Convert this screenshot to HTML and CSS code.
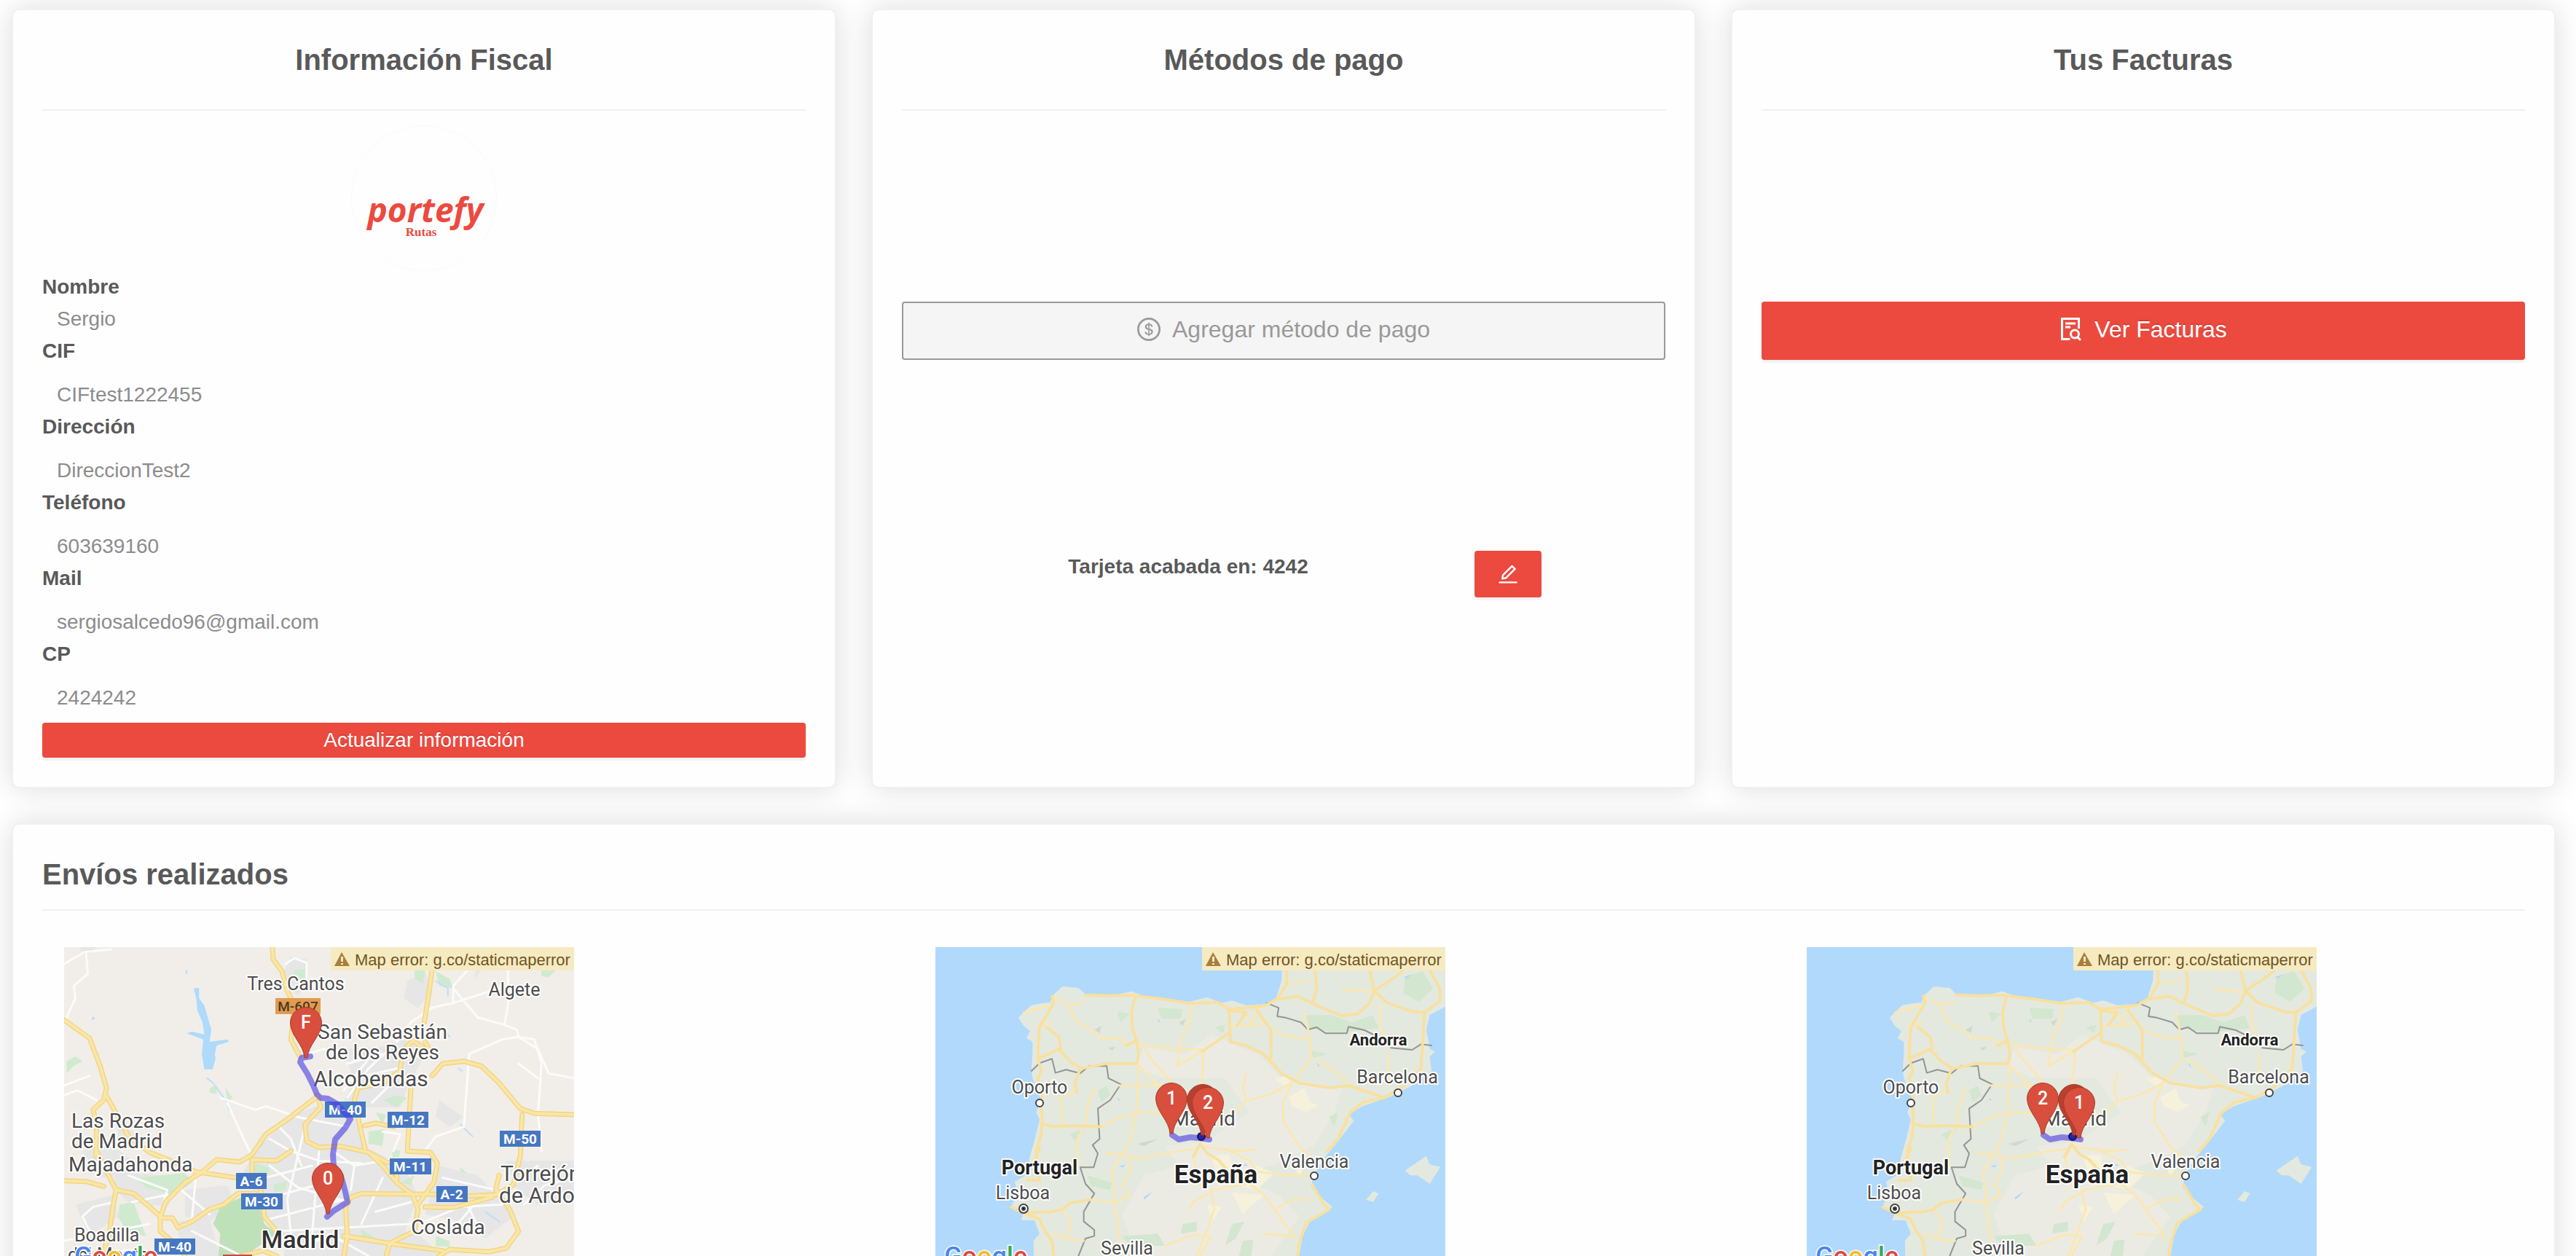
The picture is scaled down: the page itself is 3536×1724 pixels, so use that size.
FILE: index.html
```html
<!DOCTYPE html>
<html lang="es">
<head>
<meta charset="utf-8">
<meta name="viewport" content="width=device-width, initial-scale=1">
<title>Portefy Rutas</title>
<link rel="stylesheet" href="styles.css">
</head>
<body>
<svg class="sprite" aria-hidden="true">
  <defs>
    <path id="pin" d="M-2 0C-3-18-21-30-21.500-48A21.500 21.500 0 0 1 21.500-48C21-30 3-18 2 0Z"/>
    <g id="spain-roads" class="geo">
      <path d="M380 262L385 290L365 340L345 390L342 450L340 520L350 570L340 600L355 650L348 700L352 760L350 830L335 900L340 960L345 1020L310 1020M475 257L540 260L605 258L640 265L700 275L770 292L850 288L880 315L930 310L985 300L1015 275L1075 262L1130 300L1200 343L1245 335L1280 290L1292 240L1280 156M1292 240L1345 190L1375 156M1292 240L1330 290L1400 325L1435 330L1480 280L1478 230L1450 156M1045 156L1045 210L1020 270M1125 156L1130 230L1118 290M615 265L605 330L608 400L620 445L590 465M620 445L625 500L620 540L530 540L465 560L430 530L400 480L340 520M365 390L400 430L405 480M882 320L885 450L930 465L980 500L1030 580L1080 620L1170 640L1220 630L1280 660L1320 680M882 320L930 330L905 380M960 320L1000 400L1000 520M885 410L805 490M1435 330L1430 450L1425 560L1370 640L1320 680L1260 700L1225 740L1190 850L1160 900M350 785L380 798L450 795L520 800M460 560L445 620L450 660M345 890L330 940M1118 1040L1150 1120L1165 1140L1100 1195L1080 1280L1075 1332M265 1130L300 1155L380 1150L410 1140L430 1115L490 1100M300 1155L345 1180L360 1230L380 1270L385 1332M800 870L820 910L850 935L880 985M800 870L780 925"/>
    </g>
    <g id="spain-minor" class="geo">
      <path d="M385 265L430 300L440 340L450 370L490 400L520 435L570 435L600 465M340 380L380 375M300 330L370 300M430 300L470 285M775 295L770 360L745 440L735 550L810 485L805 600L800 640M630 450L660 520L715 610M625 540L620 740L600 860L550 985L560 1130L575 1300M645 465L740 480L805 480M620 540L690 640L715 620M570 630L690 630M520 800L560 770L620 740L700 745M930 580L920 640L930 690L900 740L850 760M930 695L1000 665L1060 620M1060 620L1035 700L1035 780L1080 880L1110 920M1000 400L1040 425L1110 440L1115 520L1085 570L1070 610M885 380L940 385L990 370M920 330L950 380M960 300L950 370M1130 525L1170 560L1210 610L1230 640M1330 500L1335 600M1310 290L1310 400L1330 430M450 650L405 680L410 790M500 640L480 720L475 800M470 800L450 860L455 970L420 980L340 960M530 905L580 915L630 930L720 905L790 890M600 930L600 990L580 1040L600 1085L560 1110L490 1100M800 880L900 900L955 895M870 890L940 940L960 985L1040 1000L1110 1000M880 985L930 1035L840 1060L780 1110L770 1140M830 1060L840 1140L820 1220L790 1332M940 1035L980 1080L1010 1140L1040 1200L1070 1260M1010 1140L1060 1100L1110 1100M980 1240L1060 1250M700 1290L780 1245L830 1250L800 1332M410 1140L435 1190L420 1260L385 1240M420 1260L470 1270M780 920L800 1040M1095 330L1110 430M1050 210L1110 195M1205 235L1290 245"/>
    </g>
    <g id="spain" class="geo">
      <path class="sea" d="M50 60H1494V1420H50Z"/>
      <path class="land" d="M330 1420L328 1270L345 1240L330 1185L292 1185L298 1160L265 1135L270 1110L285 1090L275 1025L305 1000L318 920L330 860L345 770L335 740L350 690L325 600L322 560L325 500L325 450L308 435L318 405L300 385L285 350L320 300L350 292L375 288L380 262L410 222L455 228L475 255L560 258L605 242L640 262L700 272L770 285L820 266L860 290L890 280L930 300L985 295L1015 270L1030 200L1035 60H1494V305L1450 340L1440 400L1450 480L1465 490L1450 510L1455 570L1400 630L1340 675L1260 715L1220 750L1235 775L1190 860L1150 930L1120 1000L1115 1050L1140 1090L1175 1130L1110 1190L1090 1250L1080 1332V1420Z"/>
      <path class="plain" d="M640 470L760 500L830 420L960 500L1030 600L1200 640L1180 740L1120 880L1000 960L900 1000L1020 1080L1080 1170L1000 1332H620L580 1160L640 1000L740 960L700 880L820 860L940 740L870 600L700 600L620 560Z"/>
      <path class="dry" d="M1050 680L1095 640L1110 700L1135 710L1100 740L1060 715ZM1010 600L1060 590L1045 640ZM830 920L880 915L890 960L930 990L960 960L1010 990L960 1060L900 1040L850 1000ZM890 1070L980 1080L920 1160ZM820 1120L860 1130L835 1190ZM1050 930L1110 940L1080 1000Z"/>
      <path class="wood" d="M680 310L750 315L745 355L690 355ZM565 325L600 335L575 370ZM1100 340L1170 340L1230 370L1290 340L1305 395L1240 405L1180 410L1130 400L1100 385ZM1380 180L1430 160L1460 230L1420 285L1375 250ZM430 830L475 805L450 865ZM480 1000L550 1030L545 1060L490 1045ZM890 1200L925 1190L900 1260L870 1290ZM750 1200L790 1190L790 1230L745 1240ZM1165 760L1190 740L1180 800ZM580 1250L680 1240L700 1290L600 1290ZM510 650L535 630L545 670L520 700ZM1110 485L1160 500L1120 515ZM840 390L870 380L865 415ZM920 1270L950 1265L945 1332H910Z"/>
      <path class="shade" d="M620 870L680 850L640 880ZM500 400L520 385L515 415ZM540 475L560 470L550 485ZM740 370L760 355L750 385Z"/>
      <path class="land" d="M1380 980L1440 920L1450 955L1480 965L1450 1035L1415 1000L1395 1000ZM1270 1100L1290 1065L1305 1075L1290 1110Z"/>
      <path class="lake" d="M565 680L575 690L568 692ZM640 1090L665 1065L650 1090L640 1100ZM1130 535L1140 555L1133 550ZM925 950L935 960L925 962ZM570 960L590 958L580 968ZM1375 185L1400 172L1385 188ZM680 355L688 365L682 368Z"/>
      <path class="frontier" d="M322 570L345 538L380 520L390 578L420 565L460 580L485 550L535 550L540 600L575 625L545 690L510 725L515 850L495 875L510 910L498 967L460 967L475 1035L500 1075L470 1150L470 1190L500 1225L500 1250L475 1260L455 1332M988 290L1022 310L1018 345L1040 350L1085 370L1105 400L1130 390L1155 415L1215 415L1220 388L1265 402L1290 420M1340 475L1400 483L1425 460L1455 465"/>
    </g>
    <g id="madrid-roads" class="geo">
      <path d="M648 60L650 110L675 160L690 240L710 300L705 380L700 440L725 510M1100 156L1090 260L1078 370M58 360L130 435L160 550L178 640L170 690L140 730L150 800L148 920M175 665L215 770L240 840L300 905L360 940L430 985L545 1010M58 1022L120 1025L170 1045M150 900L180 990L205 1060L255 1075L300 1130L335 1175L365 1175L380 1215L420 1190L470 1140L510 1120L550 1075L600 1075M205 1060L195 1140L185 1250L165 1332M330 1175L345 1110L400 1030L450 985L490 935L555 945L590 915L630 830L690 770L770 680M590 935L660 940L700 900M330 1175L330 1230L380 1290L400 1332M590 935L590 990L620 1080L625 1170L660 1230M775 670L785 720L740 790L745 860L780 885L840 880L920 905L960 960L1000 1030L1045 1080L1060 1140L1050 1230L980 1280L860 1250L855 1130L870 1090L900 1075L1100 1078L1200 1085L1280 1080L1330 1040L1350 920L1355 750M880 690L890 640L960 620L1010 570L1015 490L1045 445L1100 500L1080 450M880 690L890 760L910 890M910 795L940 785L990 800M1040 640L1030 900L1095 905L1115 950L1105 1030L1060 1120M1100 590L1130 540L1190 530L1240 550L1290 620L1350 725L1390 745L1502 750M920 905L970 945L1000 950L1000 1030M1080 1130L1160 1132L1220 1110L1270 1090M1290 1000L1280 1060L1320 1140L1345 1230L1310 1300L1260 1315L1150 1305L1120 1332M860 1250L850 1332M980 1280L970 1332M850 1250L1000 1285L1130 1310M560 1332L620 1310L660 1332"/>
    </g>
    <g id="madrid" class="geo">
      <path class="earth" d="M58 60H1502V1420H58Z"/>
      <path class="urban" d="M700 100L745 110L750 200L720 260L695 230L680 160ZM850 480L960 470L1060 420L1080 500L1030 640L1010 720L900 720L850 690L880 620ZM100 60H150L120 95ZM1030 200L1080 160L1100 240L1060 310L1020 270ZM1230 60H1330L1260 120L1220 190ZM1440 80H1502V140ZM690 760L800 700L880 740L920 890L1020 960L1060 1080L1020 1250L860 1290L700 1280L640 1200L600 1080L560 1000L600 900ZM210 790L270 830L250 890L210 850ZM110 900L180 860L270 960L260 1000L160 1010ZM200 980L400 1010L350 1130L240 1110L200 1060ZM400 1060L520 1040L540 1110L470 1190L400 1170ZM90 1120L200 1080L210 1170L130 1250ZM370 1190L470 1180L500 1332H400ZM1120 960L1230 1000L1280 1080L1330 1170L1250 1260L1180 1190L1080 1160ZM1310 940H1502V1100L1400 1120L1340 1060ZM690 1260L1060 1240L1130 1332H680ZM1120 690L1190 760L1150 800L1110 760Z"/>
      <path class="park" d="M500 1130L560 1090L610 1110L625 1200L660 1240L570 1332H495L500 1240L480 1200Z"/>
      <path class="grass" d="M260 1010L400 990L420 1030L370 1080L290 1050ZM215 1120L255 1110L290 1250L240 1240L210 1170ZM1050 156H1080L1075 210L1050 190ZM1110 160L1150 190L1160 230L1120 220ZM1410 156H1450L1430 185L1410 180ZM470 640L490 630L490 665L470 660ZM515 640L535 680L520 700ZM600 950L640 970L630 1030L590 1010ZM920 820L965 810L960 880L920 870ZM940 740L970 750L960 790ZM650 1040L690 1020L685 1060L655 1070ZM985 890L1010 900L1005 930L990 930ZM900 1220L940 1260L900 1270ZM1110 1250L1150 1270L1150 1295L1110 1290ZM710 155L740 150L740 200L710 190ZM65 530L90 510L110 530L85 550L65 580ZM960 690L1000 670L1030 680L1000 720ZM610 850L630 840L620 880L600 900ZM1180 965L1198 990L1180 985ZM715 960L735 945L725 975ZM1010 1030L1050 1000L1040 1040Z"/>
      <path class="lake" d="M425 230L440 228L440 270L455 300L465 350L475 400L470 450L520 440L525 450L490 465L485 500L487 520L478 563L455 563L448 500L452 440L405 415L420 408L455 420L450 370L435 320L432 270ZM135 360L140 345L146 355ZM402 150L408 165L403 172Z"/>
      <path class="stream" d="M463 600L480 620L495 650L520 700L525 730M1140 410L1150 430M1175 560L1185 570M1180 790L1215 840M1110 200L1145 230L1145 260M1250 1150L1290 1190"/>
      <path class="street" d="M58 130L115 80L190 70M120 80L125 170L85 220L90 270L65 350M58 630L130 590M58 670L95 650L150 690M685 130L710 105L745 125L745 230M1200 156L1160 220L1160 290L1100 310L1040 370L1000 450M1160 290L1290 230M1315 156V300L1305 380L1230 350L1160 230M1305 380L1340 400L1345 430L1300 440L1205 500L1190 800L1110 840L1080 900M1345 430L1400 480L1430 580L1502 600M1345 430L1390 440L1410 540L1400 750L1410 900M1345 540L1400 600M500 680L600 730L630 715L720 760L860 800M520 700L560 830L590 920M640 850L700 900L780 940L900 950M660 790L700 850L730 960M740 800L690 1100L700 1240M780 900L760 1250M620 1100L850 1010M640 1180L850 1100M600 1020L760 960M820 900L880 960L870 1060M880 960L1000 930M640 960L720 1050L860 1110M660 1230L1040 1200M240 1000L350 1060L330 1160M250 1110L350 1080M130 1230L110 1170L140 1130L200 1110M58 1270L300 1200M390 1060L470 1160M430 1020L420 1180M860 540L960 500M880 600L1000 560M850 650L920 520M930 700L1000 600M860 680L920 560L980 480M1080 1190L1180 1130L1300 1120M1130 1010L1220 1040L1280 1060M1150 1240L1230 1100M1330 980H1502M1360 1120L1420 1040L1502 1010M1310 1060L1400 960M1200 1120L1240 1240M940 1150L1040 1110M900 1200L960 1010M420 1230L560 1332M700 1300L820 1250L920 1332M960 820L1010 830L990 900M750 500L790 480L860 490"/>
    </g>
    <g id="warning">
      <path class="notice" d="M366 0H700V32H366Z"/>
      <path class="notice-mark" d="M381 7L392 26H371Z"/>
      <path class="notice-bang" d="M380 13h3v7h-3zM380 22h3v2h-3z"/>
    </g>
  </defs>
</svg>

<main class="page">
  <div class="summary">
    <section class="card">
      <h2 class="card-title">Información Fiscal</h2>
      <div class="avatar">
        <span class="brand">portefy</span>
        <span class="brand-sub">Rutas</span>
      </div>
      <dl class="details">
        <dt>Nombre</dt><dd class="lead">Sergio</dd>
        <dt>CIF</dt><dd>CIFtest1222455</dd>
        <dt>Dirección</dt><dd>DireccionTest2</dd>
        <dt>Teléfono</dt><dd>603639160</dd>
        <dt>Mail</dt><dd>sergiosalcedo96@gmail.com</dd>
        <dt>CP</dt><dd>2424242</dd>
      </dl>
      <button type="button" class="btn btn-small">Actualizar información</button>
    </section>

    <section class="card">
      <h2 class="card-title">Métodos de pago</h2>
      <div class="actions">
        <button type="button" class="btn btn-large" disabled>
          <svg class="icon" viewBox="64 64 896 896" aria-hidden="true"><path d="M512 64C264.600 64 64 264.600 64 512s200.600 448 448 448 448-200.600 448-448S759.400 64 512 64zm0 820c-205.400 0-372-166.600-372-372s166.600-372 372-372 372 166.600 372 372-166.600 372-372 372zm47.700-395.200l-25.400-5.900V348.600c38 5.200 61.500 29 65.500 58.200.5 4 3.900 6.900 7.900 6.900h44.900c4.700 0 8.400-4.100 8-8.800-6.100-62.300-57.400-102.300-125.900-109.200V263c0-4.400-3.600-8-8-8h-28.100c-4.400 0-8 3.600-8 8v33c-70.800 6.900-126.200 46-126.200 119 0 67.600 49.800 100.200 102.100 112.700l24.700 6.300v142.700c-44.200-5.900-69-29.500-74.100-61.300-.6-3.800-4-6.600-7.900-6.600H363c-4.700 0-8.400 4-8 8.700 4.500 55 46.200 105.600 135.200 112.100V761c0 4.400 3.600 8 8 8h28.400c4.400 0 8-3.600 8-8.100l-.2-31.700c78.300-6.900 134.300-48.800 134.300-124-.1-69.400-44.200-100.400-109-116.400zm-68.600-16.200c-5.600-1.600-10.300-3.100-15-5-33.800-12.200-49.500-31.900-49.500-57.300 0-36.300 27.500-57 64.500-61.700v124zM534.300 677V543.300c3.100.9 5.900 1.600 8.800 2.200 47.300 14.400 63.200 34.400 63.200 65.100 0 39.100-29.400 62.600-72 66.400z"/></svg>
          <span>Agregar método de pago</span>
        </button>
        <div class="method">
          <strong class="method-name">Tarjeta acabada en: 4242</strong>
          <button type="button" class="btn btn-edit" aria-label="Editar tarjeta">
            <svg class="icon" viewBox="64 64 896 896" aria-hidden="true"><path d="M257.700 752c2 0 4-.2 6-.5L431.900 722c2-.4 3.900-1.300 5.300-2.800l423.900-423.900a9.960 9.960 0 000-14.100L694.900 114.900c-1.900-1.900-4.400-2.900-7.100-2.900s-5.200 1-7.100 2.900L256.800 538.800c-1.500 1.500-2.400 3.300-2.800 5.300l-29.500 168.200a33.500 33.500 0 009.400 29.800c6.600 6.400 14.900 9.900 23.800 9.900zm67.400-174.400L687.800 215l73.300 73.300-362.700 362.600-88.900 15.700 15.600-89zM880 836H144c-17.700 0-32 14.300-32 32v36c0 4.400 3.600 8 8 8h784c4.400 0 8-3.600 8-8v-36c0-17.700-14.300-32-32-32z"/></svg>
          </button>
        </div>
      </div>
    </section>

    <section class="card">
      <h2 class="card-title">Tus Facturas</h2>
      <div class="actions">
        <button type="button" class="btn btn-large">
          <svg class="icon icon-line" viewBox="0 0 32 32" aria-hidden="true"><path d="M26.500 15V1.500H3.500V29.500H14.500M8 8H22M8 13H15M25 27L29 31"/><circle cx="21" cy="22.500" r="5.500"/></svg>
          <span>Ver Facturas</span>
        </button>
      </div>
    </section>
  </div>

  <section class="card shipments">
    <h2 class="card-title">Envíos realizados</h2>
    <div class="maps">
      <svg class="map" viewBox="0 0 700 450" role="img" aria-label="Ruta de San Sebastián de los Reyes a Madrid">
        <g transform="translate(-28.100 -20) scale(.4847 .3333)">
          <use href="#madrid"/>
          <use href="#madrid-roads" class="road-edge"/>
          <use href="#madrid-roads" class="road-core"/>
        </g>
        <g class="city">
          <text x="318" y="59" class="t-small" text-anchor="middle">Tres Cantos</text>
          <text x="618" y="67" class="t-small" text-anchor="middle">Algete</text>
          <text x="437" y="126" class="t-town" text-anchor="middle">San Sebastián</text>
          <text x="437" y="154" class="t-town" text-anchor="middle">de los Reyes</text>
          <text x="421" y="191" class="t-large" text-anchor="middle">Alcobendas</text>
          <text x="10" y="248" class="t-town">Las Rozas</text>
          <text x="10" y="276" class="t-town">de Madrid</text>
          <text x="6" y="308" class="t-town">Majadahonda</text>
          <text x="599" y="321" class="t-large">Torrejón</text>
          <text x="597" y="351" class="t-large">de Ardoz</text>
          <text x="527" y="394" class="t-town" text-anchor="middle">Coslada</text>
          <text x="324" y="413" class="t-capital" text-anchor="middle">Madrid</text>
          <text x="14" y="404" class="t-small">Boadilla</text>
          <text x="5" y="431" class="t-small">del Monte</text>
        </g>
        <g class="shield">
          <path class="shield-local" d="M290 70h62v22h-62z"/>
          <path d="M358 212h56v22h-56zM444 226h56v22h-56zM598 252h56v22h-56zM447 290h57v22h-57zM236 310h42v22h-42zM243 338h57v22h-57zM511 328h43v22h-43zM124 400h56v22h-56z"/>
          <path class="shield-red" d="M218 422h40v22h-40z"/>
          <text x="321" y="88" class="dark">M-607</text>
          <text x="386" y="230">M-40</text>
          <text x="472" y="244">M-12</text>
          <text x="626" y="270">M-50</text>
          <text x="475" y="308">M-11</text>
          <text x="257" y="328">A-6</text>
          <text x="271" y="356">M-30</text>
          <text x="532" y="346">A-2</text>
          <text x="152" y="418">M-40</text>
        </g>
        <path class="route" d="M338 150L326 152L324 158L334 174L342 190L347 202L352 207L362 208L374 215L386 228L393 236L386 248L372 264L369 285L370 300L380 314L386 336L389 350L370 362L361 370"/>
        <use href="#pin" class="pin" x="332" y="152"/>
        <text class="pin-label" x="332" y="112">F</text>
        <use href="#pin" class="pin" x="362" y="366"/>
        <text class="pin-label" x="362" y="326">0</text>
        <use href="#warning"/>
        <text class="notice-text" x="399" y="25">Map error: g.co/staticmaperror</text>
        <text class="google" x="14" y="437"><tspan class="g-blue">G</tspan><tspan class="g-red">o</tspan><tspan class="g-yellow">o</tspan><tspan class="g-blue">g</tspan><tspan class="g-green">l</tspan><tspan class="g-red">e</tspan></text>
      </svg>

      <svg class="map" viewBox="0 0 700 450" role="img" aria-label="Ruta por España, envío dos">
        <g transform="translate(-24.200 -20) scale(.4847 .3333)">
          <use href="#spain"/>
          <use href="#spain-minor" class="road-thin"/>
          <use href="#spain-roads" class="road-main"/>
        </g>
        <g class="city">
          <text x="143" y="201" class="t-small" text-anchor="middle">Oporto</text>
          <text x="120" y="346" class="t-small" text-anchor="middle">Lisboa</text>
          <text x="634" y="187" class="t-small" text-anchor="middle">Barcelona</text>
          <text x="520" y="303" class="t-small" text-anchor="middle">Valencia</text>
          <text x="368" y="245" class="t-town" text-anchor="middle">Madrid</text>
          <text x="263" y="422" class="t-small" text-anchor="middle">Sevilla</text>
          <text x="143" y="312" class="t-country" text-anchor="middle">Portugal</text>
          <text x="608" y="135" class="t-andorra" text-anchor="middle">Andorra</text>
          <text x="385" y="324" class="t-spain" text-anchor="middle">España</text>
        </g>
        <g class="dot"><circle cx="143" cy="214" r="5"/><circle cx="635" cy="200" r="5"/><circle cx="520" cy="314" r="5"/><circle cx="121" cy="359" r="6"/><circle class="dot-core" cx="121" cy="359" r="2"/></g>
        <path class="route" d="M325 258L334 264L350 261L362 262L376 264"/>
        <circle class="hub" cx="365" cy="260" r="5"/>
        <use href="#pin" class="pin pin-back" x="367" y="258"/>
        <use href="#pin" class="pin" x="374" y="262"/>
        <text class="pin-label" x="374" y="222">2</text>
        <use href="#pin" class="pin" x="324" y="256"/>
        <text class="pin-label" x="324" y="216">1</text>
        <use href="#warning"/>
        <text class="notice-text" x="399" y="25">Map error: g.co/staticmaperror</text>
        <text class="google" x="12" y="437"><tspan class="g-blue">G</tspan><tspan class="g-red">o</tspan><tspan class="g-yellow">o</tspan><tspan class="g-blue">g</tspan><tspan class="g-green">l</tspan><tspan class="g-red">e</tspan></text>
      </svg>

      <svg class="map" viewBox="0 0 700 450" role="img" aria-label="Ruta por España, envío tres">
        <g transform="translate(-24.200 -20) scale(.4847 .3333)">
          <use href="#spain"/>
          <use href="#spain-minor" class="road-thin"/>
          <use href="#spain-roads" class="road-main"/>
        </g>
        <g class="city">
          <text x="143" y="201" class="t-small" text-anchor="middle">Oporto</text>
          <text x="120" y="346" class="t-small" text-anchor="middle">Lisboa</text>
          <text x="634" y="187" class="t-small" text-anchor="middle">Barcelona</text>
          <text x="520" y="303" class="t-small" text-anchor="middle">Valencia</text>
          <text x="368" y="245" class="t-town" text-anchor="middle">Madrid</text>
          <text x="263" y="422" class="t-small" text-anchor="middle">Sevilla</text>
          <text x="143" y="312" class="t-country" text-anchor="middle">Portugal</text>
          <text x="608" y="135" class="t-andorra" text-anchor="middle">Andorra</text>
          <text x="385" y="324" class="t-spain" text-anchor="middle">España</text>
        </g>
        <g class="dot"><circle cx="143" cy="214" r="5"/><circle cx="635" cy="200" r="5"/><circle cx="520" cy="314" r="5"/><circle cx="121" cy="359" r="6"/><circle class="dot-core" cx="121" cy="359" r="2"/></g>
        <path class="route" d="M325 258L334 264L350 261L362 262L376 264"/>
        <circle class="hub" cx="365" cy="260" r="5"/>
        <use href="#pin" class="pin pin-back" x="367" y="258"/>
        <use href="#pin" class="pin" x="374" y="262"/>
        <text class="pin-label" x="374" y="222">1</text>
        <use href="#pin" class="pin" x="324" y="256"/>
        <text class="pin-label" x="324" y="216">2</text>
        <use href="#warning"/>
        <text class="notice-text" x="399" y="25">Map error: g.co/staticmaperror</text>
        <text class="google" x="12" y="437"><tspan class="g-blue">G</tspan><tspan class="g-red">o</tspan><tspan class="g-yellow">o</tspan><tspan class="g-blue">g</tspan><tspan class="g-green">l</tspan><tspan class="g-red">e</tspan></text>
      </svg>
    </div>
  </section>
</main>
</body>
</html>
```
FILE: styles.css
```css
:root {
  --red: #ec4a3f;
  --ink: #595959;
  --muted: #8c8c8c;
  --rule: #f0f0f0;
}

* { box-sizing: border-box; }

body {
  margin: 0;
  background: #fff;
  color: var(--ink);
  font-family: "Liberation Sans", Arial, sans-serif;
  font-size: 28px;
  line-height: 44px;
}

.sprite { position: absolute; width: 0; height: 0; }

.page {
  display: flex;
  flex-direction: column;
  gap: 48px;
  height: 100vh;
  padding: 12px 28px 0 16px;
  overflow: hidden;
}

.summary {
  display: grid;
  grid-template-columns: repeat(3, 1fr);
  gap: 48px;
}

.card {
  flex: none;
  padding: 40px;
  border: 2px solid var(--rule);
  border-radius: 10px;
  background: #fefefe;
  box-shadow: 0 0 40px rgba(0, 0, 0, .14);
}

.card-title {
  margin: 0 0 20px;
  padding-bottom: 40px;
  border-bottom: 2px solid var(--rule);
  font-size: 40px;
  line-height: 56px;
  text-align: center;
}

/* Fiscal data */
.avatar {
  display: flex;
  flex-direction: column;
  align-items: center;
  width: 200px;
  height: 200px;
  margin: 0 auto;
  padding-top: 90px;
  border: 1px solid #fafafa;
  border-radius: 50%;
  color: var(--red);
  font-weight: 700;
}
.brand {
  padding-left: 4px;
  font-family: "Open Sans", sans-serif;
  font-size: 46px;
  font-style: italic;
  line-height: 48px;
}
.brand-sub {
  padding-right: 8px;
  font-family: "Liberation Serif", serif;
  font-size: 17px;
  line-height: 16px;
}

.details { margin: 0 0 12px; }
.details dt { font-weight: 700; }
.details dd { margin: 16px 0 0 20px; color: var(--muted); }
.details .lead { margin-top: 0; }

/* Buttons */
.btn {
  display: flex;
  align-items: center;
  justify-content: center;
  gap: 16px;
  width: 100%;
  padding: 0;
  border: 0;
  border-radius: 4px;
  background: var(--red);
  box-shadow: 0 4px 0 rgba(0, 0, 0, .045);
  color: #fff;
  font: inherit;
  text-shadow: 0 -2px 0 rgba(0, 0, 0, .12);
}
.btn-small { height: 48px; }
.btn-large { height: 80px; padding-bottom: 4px; font-size: 32px; }
.btn-edit { width: 92px; height: 64px; }
.btn:disabled {
  border: 2px solid #999;
  background: #f5f5f5;
  box-shadow: none;
  color: #999;
  text-shadow: none;
}
.icon { width: 28px; height: 28px; fill: currentColor; }
.btn-large .icon { width: 32px; height: 32px; }
.icon-line { overflow: visible; fill: none; stroke: currentColor; stroke-width: 3; }

.actions {
  display: grid;
  gap: 262px;
  padding-top: 242px;
}
.method { display: grid; grid-template-columns: 3fr 1fr; }
.method-name { text-align: center; }

/* Shipments */
.shipments .card-title {
  margin-bottom: 50px;
  padding-bottom: 20px;
  text-align: left;
}
.maps {
  display: grid;
  grid-template-columns: repeat(3, 1fr);
  gap: 240px;
  padding: 0 30px;
}
.map {
  display: block;
  width: 100%;
  max-width: 700px;
  overflow: hidden;
  font-family: Roboto, "Liberation Sans", sans-serif;
}
.geo path { vector-effect: non-scaling-stroke; stroke-linejoin: round; stroke-linecap: round; }

.sea { fill: #b1d9fb; }
.land { fill: #e4e9df; }
.plain { fill: #ecebe3; }
.dry { fill: #f6f1da; }
.wood { fill: #d3e6d0; }
.shade { fill: #d2d8cf; }
.lake { fill: #aedafc; }
.frontier { fill: none; stroke: #949494; stroke-width: 2; }
.earth { fill: #f1eee9; }
.urban { fill: #e6e6e6; }
.park { fill: #bfe1ba; }
.grass { fill: #d0ead0; }
.stream { fill: none; stroke: #c0def7; stroke-width: 2; }
.street { fill: none; stroke: #fbfbf9; stroke-width: 3; }

.road-edge { fill: none; stroke: #f1d584; stroke-width: 7; }
.road-core { fill: none; stroke: #fae6a6; stroke-width: 4; }
.road-main { fill: none; stroke: #f8e0a0; stroke-width: 4; }
.road-thin { fill: none; stroke: #fae7b3; stroke-width: 3; }
.route {
  fill: none;
  stroke: #4a3fe0;
  stroke-width: 8;
  stroke-linejoin: round;
  stroke-linecap: round;
  opacity: .62;
}

.city {
  fill: #4d4d4d;
  font-size: 27px;
  paint-order: stroke;
  stroke: #fff;
  stroke-width: 4;
  stroke-linejoin: round;
}
.t-small { font-size: 25px; }
.t-town { font-size: 28px; }
.t-large { font-size: 30px; }
.t-capital { fill: #333; font-size: 34px; font-weight: 500; }
.t-country { fill: #222; font-size: 27px; font-weight: 700; }
.t-spain { fill: #222; font-size: 35px; font-weight: 700; }
.t-andorra { fill: #222; font-size: 22px; font-weight: 700; }

.shield { fill: #4577c3; }
.shield-local { fill: #e29b52; }
.shield-red { fill: #c8484a; }
.shield text { fill: #fff; font-size: 19px; font-weight: 700; text-anchor: middle; }
.shield .dark { fill: #4a3a20; font-weight: 500; }

.pin { fill: #d84f3d; stroke: #a8392c; stroke-width: 1; }
.pin-back { fill: #b8402f; }
.pin-label { fill: #fff; font-size: 25px; font-weight: 500; text-anchor: middle; }
.hub { fill: #2a23a0; stroke: #14145a; stroke-width: 2; }
.dot { fill: #fff; stroke: #444; stroke-width: 2; }
.dot .dot-core { fill: #111; }

.notice { fill: #f6eac0; }
.notice-mark { fill: #a97e3c; }
.notice-bang { fill: #f6eac0; }
.notice-text { fill: #6f5525; font-family: "Liberation Sans", Arial, sans-serif; font-size: 22px; }

.google { font-size: 36px; font-weight: 500; paint-order: stroke; stroke: #fff; stroke-width: 3; }
.g-blue { fill: #4a86ec; }
.g-red { fill: #dd4b3e; }
.g-yellow { fill: #f5bb2b; }
.g-green { fill: #3aa757; }
```
